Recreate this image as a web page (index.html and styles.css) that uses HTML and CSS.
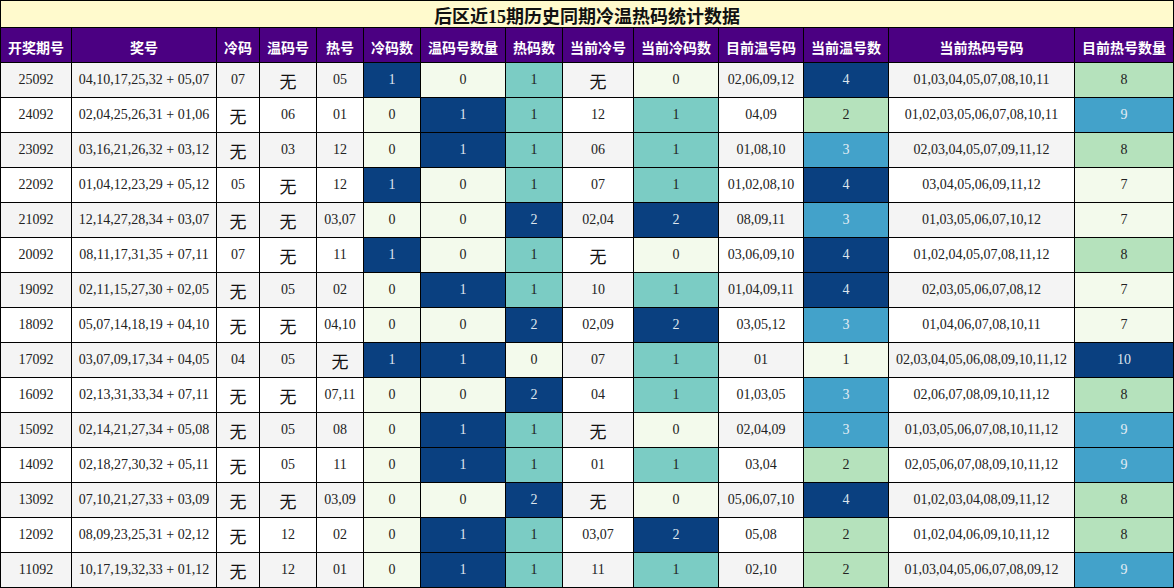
FILE: index.html
```html
<!DOCTYPE html>
<html lang="zh-CN">
<head>
<meta charset="utf-8">
<title>后区近15期历史同期冷温热码统计数据</title>
<link rel="stylesheet" href="styles.css">
</head>
<body>
<div class="sheet">
  <div class="title">后区近15期历史同期冷温热码统计数据</div>
  <div class="row head">
    <div>开奖期号</div><div>奖号</div><div>冷码</div><div>温码号</div><div>热号</div><div>冷码数</div><div>温码号数量</div><div>热码数</div><div>当前冷号</div><div>当前冷码数</div><div>目前温号码</div><div>当前温号数</div><div>当前热码号码</div><div>目前热号数量</div>
  </div>

  <div class="row alt">
    <div>25092</div><div>04,10,17,25,32 + 05,07</div><div>07</div><div><span class="none">无</span></div><div>05</div><div class="c4">1</div><div class="c0">0</div><div class="c2">1</div><div><span class="none">无</span></div><div class="c0">0</div><div>02,06,09,12</div><div class="c4">4</div><div>01,03,04,05,07,08,10,11</div><div class="c1">8</div>
  </div>
  <div class="row">
    <div>24092</div><div>02,04,25,26,31 + 01,06</div><div><span class="none">无</span></div><div>06</div><div>01</div><div class="c0">0</div><div class="c4">1</div><div class="c2">1</div><div>12</div><div class="c2">1</div><div>04,09</div><div class="c1">2</div><div>01,02,03,05,06,07,08,10,11</div><div class="c3">9</div>
  </div>
  <div class="row alt">
    <div>23092</div><div>03,16,21,26,32 + 03,12</div><div><span class="none">无</span></div><div>03</div><div>12</div><div class="c0">0</div><div class="c4">1</div><div class="c2">1</div><div>06</div><div class="c2">1</div><div>01,08,10</div><div class="c3">3</div><div>02,03,04,05,07,09,11,12</div><div class="c1">8</div>
  </div>
  <div class="row">
    <div>22092</div><div>01,04,12,23,29 + 05,12</div><div>05</div><div><span class="none">无</span></div><div>12</div><div class="c4">1</div><div class="c0">0</div><div class="c2">1</div><div>07</div><div class="c2">1</div><div>01,02,08,10</div><div class="c4">4</div><div>03,04,05,06,09,11,12</div><div class="c0">7</div>
  </div>
  <div class="row alt">
    <div>21092</div><div>12,14,27,28,34 + 03,07</div><div><span class="none">无</span></div><div><span class="none">无</span></div><div>03,07</div><div class="c0">0</div><div class="c0">0</div><div class="c4">2</div><div>02,04</div><div class="c4">2</div><div>08,09,11</div><div class="c3">3</div><div>01,03,05,06,07,10,12</div><div class="c0">7</div>
  </div>
  <div class="row">
    <div>20092</div><div>08,11,17,31,35 + 07,11</div><div>07</div><div><span class="none">无</span></div><div>11</div><div class="c4">1</div><div class="c0">0</div><div class="c2">1</div><div><span class="none">无</span></div><div class="c0">0</div><div>03,06,09,10</div><div class="c4">4</div><div>01,02,04,05,07,08,11,12</div><div class="c1">8</div>
  </div>
  <div class="row alt">
    <div>19092</div><div>02,11,15,27,30 + 02,05</div><div><span class="none">无</span></div><div>05</div><div>02</div><div class="c0">0</div><div class="c4">1</div><div class="c2">1</div><div>10</div><div class="c2">1</div><div>01,04,09,11</div><div class="c4">4</div><div>02,03,05,06,07,08,12</div><div class="c0">7</div>
  </div>
  <div class="row">
    <div>18092</div><div>05,07,14,18,19 + 04,10</div><div><span class="none">无</span></div><div><span class="none">无</span></div><div>04,10</div><div class="c0">0</div><div class="c0">0</div><div class="c4">2</div><div>02,09</div><div class="c4">2</div><div>03,05,12</div><div class="c3">3</div><div>01,04,06,07,08,10,11</div><div class="c0">7</div>
  </div>
  <div class="row alt">
    <div>17092</div><div>03,07,09,17,34 + 04,05</div><div>04</div><div>05</div><div><span class="none">无</span></div><div class="c4">1</div><div class="c4">1</div><div class="c0">0</div><div>07</div><div class="c2">1</div><div>01</div><div class="c0">1</div><div>02,03,04,05,06,08,09,10,11,12</div><div class="c4">10</div>
  </div>
  <div class="row">
    <div>16092</div><div>02,13,31,33,34 + 07,11</div><div><span class="none">无</span></div><div><span class="none">无</span></div><div>07,11</div><div class="c0">0</div><div class="c0">0</div><div class="c4">2</div><div>04</div><div class="c2">1</div><div>01,03,05</div><div class="c3">3</div><div>02,06,07,08,09,10,11,12</div><div class="c1">8</div>
  </div>
  <div class="row alt">
    <div>15092</div><div>02,14,21,27,34 + 05,08</div><div><span class="none">无</span></div><div>05</div><div>08</div><div class="c0">0</div><div class="c4">1</div><div class="c2">1</div><div><span class="none">无</span></div><div class="c0">0</div><div>02,04,09</div><div class="c3">3</div><div>01,03,05,06,07,08,10,11,12</div><div class="c3">9</div>
  </div>
  <div class="row">
    <div>14092</div><div>02,18,27,30,32 + 05,11</div><div><span class="none">无</span></div><div>05</div><div>11</div><div class="c0">0</div><div class="c4">1</div><div class="c2">1</div><div>01</div><div class="c2">1</div><div>03,04</div><div class="c1">2</div><div>02,05,06,07,08,09,10,11,12</div><div class="c3">9</div>
  </div>
  <div class="row alt">
    <div>13092</div><div>07,10,21,27,33 + 03,09</div><div><span class="none">无</span></div><div><span class="none">无</span></div><div>03,09</div><div class="c0">0</div><div class="c0">0</div><div class="c4">2</div><div><span class="none">无</span></div><div class="c0">0</div><div>05,06,07,10</div><div class="c4">4</div><div>01,02,03,04,08,09,11,12</div><div class="c1">8</div>
  </div>
  <div class="row">
    <div>12092</div><div>08,09,23,25,31 + 02,12</div><div><span class="none">无</span></div><div>12</div><div>02</div><div class="c0">0</div><div class="c4">1</div><div class="c2">1</div><div>03,07</div><div class="c4">2</div><div>05,08</div><div class="c1">2</div><div>01,02,04,06,09,10,11,12</div><div class="c1">8</div>
  </div>
  <div class="row alt">
    <div>11092</div><div>10,17,19,32,33 + 01,12</div><div><span class="none">无</span></div><div>12</div><div>01</div><div class="c0">0</div><div class="c4">1</div><div class="c2">1</div><div>11</div><div class="c2">1</div><div>02,10</div><div class="c1">2</div><div>01,03,04,05,06,07,08,09,12</div><div class="c3">9</div>
  </div>
</div>
</body>
</html>
```

FILE: styles.css
```css
html, body {
  margin: 0;
  padding: 0;
  background: #fff;
}

.sheet {
  display: grid;
  grid-template-columns: 70px 144px 42px 56px 46px 56px 84px 56px 70px 84px 84px 84px 185px 98px;
  grid-template-rows: 26px repeat(16, 34px);
  gap: 1px;
  padding: 1px;
  width: 1174px;
  box-sizing: border-box;
  background: #000;
  font-family: "Liberation Serif", "Noto Sans CJK SC", serif;
  font-size: 14px;
  color: #222;
}

.title {
  grid-column: 1 / -1;
  background: #fffacd;
  display: flex;
  align-items: center;
  justify-content: center;
  font-size: 18px;
  font-weight: bold;
  color: #111;
  padding-top: 2px;
}

.row {
  display: contents;
}

.row > div {
  display: flex;
  align-items: center;
  justify-content: center;
  background: #fff;
  white-space: nowrap;
  line-height: 1;
}

.row.alt > div {
  background: #f4f4f4;
}

.row.head > div {
  background: #4b0082;
  color: #fff;
  font-family: "Noto Sans CJK SC", sans-serif;
  font-weight: bold;
  font-size: 14px;
  padding-top: 3px;
}

.none {
  display: block;
  font-family: "Noto Sans CJK SC", sans-serif;
  font-size: 17px;
  line-height: 17px;
  position: relative;
  top: 0;
  color: #111;
}

.row > div.c0 { background: #f3faec; }
.row > div.c1 { background: #b5e2bc; }
.row > div.c2 { background: #7bccc4; }
.row > div.c3 { background: #43a2ca; color: #e6eef5; }
.row > div.c4 { background: #0a4080; color: #dfe6ee; }
```
